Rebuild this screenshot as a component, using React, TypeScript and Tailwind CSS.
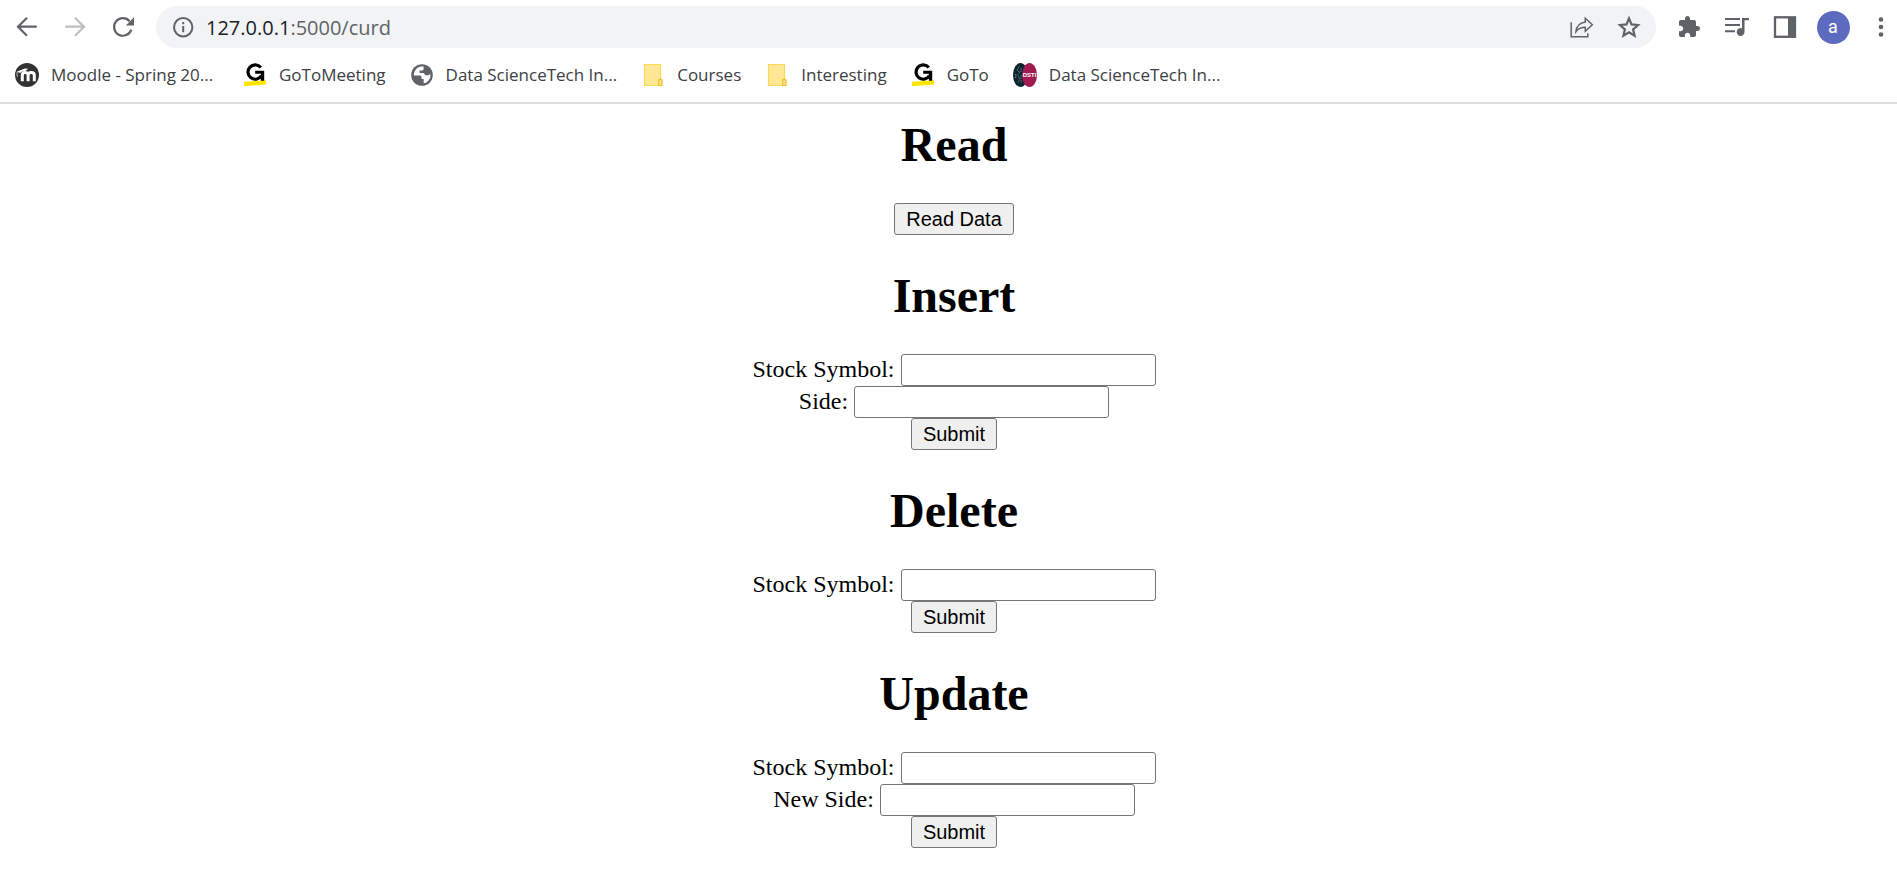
import React, { useId } from "react";

type IconProps = { className?: string };

const BackIcon = ({ className = "" }: IconProps) => (
  <svg viewBox="0 0 30 30" className={`size-[30px] ${className}`} fill="none" stroke="currentColor" strokeWidth="2.2" aria-hidden="true">
    <path d="M24.7 14.7H7M15 5.7l-9 9 9 9" />
  </svg>
);

const ForwardIcon = ({ className = "" }: IconProps) => (
  <svg viewBox="0 0 30 30" className={`size-[30px] ${className}`} fill="none" stroke="currentColor" strokeWidth="2.2" aria-hidden="true">
    <path d="M5.3 14.7H23M15 5.7l9 9-9 9" />
  </svg>
);

const ReloadIcon = () => (
  <svg viewBox="0 0 30 30" className="size-[30px]" fill="none" aria-hidden="true">
    <path d="M21.6 9.2A8.8 8.8 0 1 0 23.3 17.6" stroke="currentColor" strokeWidth="2.2" />
    <path d="M26 5.3v8.2h-8.2z" fill="currentColor" />
  </svg>
);

const InfoIcon = () => (
  <svg viewBox="0 0 30 30" className="size-[30px]" aria-hidden="true">
    <circle cx="15.2" cy="15.3" r="9.2" fill="none" stroke="currentColor" strokeWidth="2" />
    <path d="M14.2 14h2v6.300h-2zM14.2 10h2v2.200h-2z" fill="currentColor" />
  </svg>
);

const ShareIcon = () => (
  <svg viewBox="0 0 30 30" className="size-[30px]" fill="none" stroke="currentColor" strokeWidth="1.5" aria-hidden="true">
    <path d="M5.2 10.2v14.5h16.6v-3.5" />
    <path d="M19.3 6.2l7 6.500-7 6.500v-3.900c-4 0-7 1.200-9.400 4.400.5-5 3.600-9 9.400-9.800z" />
  </svg>
);

const StarIcon = () => (
  <svg viewBox="0 0 30 30" className="size-[30px]" aria-hidden="true">
    <path
      d="M15 6.400l2.500 6 6.500.6-4.900 4.300 1.500 6.400L15 20.300l-5.600 3.400 1.500-6.400L6 13l6.500-.6z"
      fill="none"
      stroke="currentColor"
      strokeWidth="2.200"
    />
  </svg>
);

const PuzzleIcon = () => (
  <svg viewBox="0 0 24 24" className="size-6" fill="currentColor" aria-hidden="true">
    <path d="M20.500 11H19V7c0-1.100-.9-2-2-2h-4V3.500C13 2.120 11.880 1 10.500 1S8 2.120 8 3.500V5H4c-1.100 0-1.990.9-1.990 2v3.800H3.500c1.490 0 2.700 1.210 2.700 2.700s-1.210 2.700-2.700 2.700H2V20c0 1.100.9 2 2 2h3.800v-1.500c0-1.490 1.210-2.700 2.700-2.700s2.700 1.210 2.700 2.700V22H17c1.100 0 2-.9 2-2v-4h1.500c1.380 0 2.500-1.120 2.500-2.500S21.880 11 20.500 11z" />
  </svg>
);

const QueueIcon = () => (
  <svg viewBox="0 0 30 30" className="size-[30px]" fill="currentColor" aria-hidden="true">
    <path d="M3 6h15v2H3zM3 12h15v2H3zM3 18.300h10v2H3z" />
    <path d="M20 6h7v2.200h-4.500v11.800a3.900 3.900 0 1 1-2.500-3.600z" />
  </svg>
);

const PanelIcon = () => (
  <svg viewBox="0 0 30 30" className="size-[30px]" aria-hidden="true">
    <rect x="5" y="5.300" width="20" height="19.500" fill="none" stroke="currentColor" strokeWidth="2.300" />
    <path d="M18 5h7v20h-7z" fill="currentColor" />
  </svg>
);

const DotsIcon = () => (
  <svg viewBox="0 0 30 30" className="size-[30px]" fill="currentColor" aria-hidden="true">
    <circle cx="15" cy="7.500" r="2.300" />
    <circle cx="15" cy="15" r="2.300" />
    <circle cx="15" cy="22.500" r="2.300" />
  </svg>
);

const MoodleIcon = () => (
  <svg viewBox="0 0 24 24" className="size-6" aria-hidden="true">
    <circle cx="12" cy="12" r="12" fill="#333333" />
    <path
      d="M7.300 18.200v-6c0-3.600 5.800-3.600 5.800 0v6M13.100 12.200c0-3.600 6.200-3.600 6.200 0v6"
      fill="none"
      stroke="#ffffff"
      strokeWidth="3"
    />
    <path d="M1.800 8.800l8-3.300 3.500.2-3.300 2.600c-2.500-.4-4 .5-4.600 1.700z" fill="#ffffff" />
    <path d="M2.200 8.900c-.3 1.700-.2 3.200.1 4.800" fill="none" stroke="#ffffff" strokeWidth=".7" />
  </svg>
);

const GoToIcon = () => (
  <svg viewBox="0 0 24 24" className="size-6" aria-hidden="true">
    <path d="M1 18.800l22-1.500v4.200L1 23.200z" fill="#ffe600" />
    <path d="M17.800 4.500A7.200 7.200 0 1 0 18.500 12.500" fill="none" stroke="#000000" strokeWidth="3.200" />
    <path d="M12.200 7.800h9v9.900h-3.300v-7H12.200z" fill="#000000" />
  </svg>
);

const GlobeIcon = () => (
  <svg viewBox="0 0 24 24" className="size-6" aria-hidden="true">
    <circle cx="12" cy="12" r="10.800" fill="#5f6368" />
    <path
      d="M13.500 3.600c-3.800-.7-7.200 1.200-8.800 4.600-.7 1.700-.9 3-.8 4.300h5.600c1.700 0 2 .8 2 2.100v1.300h2.200v4.300c3.300-.4 5.700-2.800 6.500-5.800.3-1.200.3-2.500 0-3.700-1 1.400-2.100 1.800-3.700 1.600-2.200-.3-1.700-2.200-3.400-2.400H9.500V7.600h2.400c1.300 0 1.700-.6 1.700-1.800z"
      fill="#ffffff"
    />
  </svg>
);

const FolderIcon = () => (
  <svg viewBox="0 0 24 24" className="size-6" aria-hidden="true">
    <path d="M3.500 1.500h16v21h-16z" fill="#ffe793" stroke="#fbd75b" strokeWidth="1.200" />
    <path d="M17.700 22.500v-5.300c0-1.400 3.300-1.400 3.300 0v5.300z" fill="#ffe487" stroke="#eec02f" strokeWidth="1.200" />
  </svg>
);

const DstiIcon = () => (
  <svg viewBox="0 0 24 24" className="size-6" aria-hidden="true">
    <ellipse cx="7.500" cy="12" rx="7.500" ry="12" fill="#0d2430" />
    <path d="M6 3.500l-2 4 3 1.500-3.500 4L7 15l-2 4M8 5v4M2.500 11v5M8 12v8" fill="none" stroke="#81919a" strokeWidth=".8" strokeDasharray="1.500 1" />
    <ellipse cx="16.500" cy="12" rx="7.500" ry="12" fill="#a01c50" />
    <text x="16.600" y="14.300" textAnchor="middle" fontSize="6" fontWeight="700" fontFamily="Liberation Sans, sans-serif" fill="#ffffff">
      DSTI
    </text>
  </svg>
);

const bookmarks = [
  { label: "Moodle - Spring 20...", Icon: MoodleIcon },
  { label: "GoToMeeting", Icon: GoToIcon },
  { label: "Data ScienceTech In...", Icon: GlobeIcon },
  { label: "Courses", Icon: FolderIcon },
  { label: "Interesting", Icon: FolderIcon },
  { label: "GoTo", Icon: GoToIcon },
  { label: "Data ScienceTech In...", Icon: DstiIcon },
];

function ToolButton({ label, children }: { label: string; children: React.ReactNode }) {
  return (
    <button type="button" aria-label={label} className="flex size-[30px] shrink-0 items-center justify-center">
      {children}
    </button>
  );
}

function BrowserBar() {
  return (
    <header className="border-b-2 border-[#dcdcdc] bg-white font-['Open_Sans','Noto_Sans',sans-serif] text-[#5f6368]">
      <div className="flex items-center gap-[18px] pt-[6px] pr-px pl-3">
        <ToolButton label="Back"><BackIcon /></ToolButton>
        <ToolButton label="Forward"><ForwardIcon className="text-[#bdbfc1]" /></ToolButton>
        <ToolButton label="Reload"><ReloadIcon /></ToolButton>
        <div className="flex h-[42px] min-w-0 flex-1 items-center rounded-full bg-[#f1f3f4] px-3">
          <ToolButton label="Site information"><InfoIcon /></ToolButton>
          <div
            role="textbox"
            aria-label="Address"
            contentEditable
            suppressContentEditableWarning
            className="ml-2 min-w-0 flex-1 truncate pt-px text-[20px] leading-7 outline-none"
          >
            <span className="text-[#202124]">127.0.0.1</span>:5000/curd
          </div>
          <div className="flex gap-[18px]">
            <ToolButton label="Share"><ShareIcon /></ToolButton>
            <ToolButton label="Bookmark this page"><StarIcon /></ToolButton>
          </div>
        </div>
        <ToolButton label="Extensions"><PuzzleIcon /></ToolButton>
        <ToolButton label="Media controls"><QueueIcon /></ToolButton>
        <ToolButton label="Side panel"><PanelIcon /></ToolButton>
        <ToolButton label="Profile">
          <span className="flex size-[33px] shrink-0 items-center justify-center rounded-full bg-[#5c6bc0] pb-px font-[Roboto,sans-serif] text-[18px] leading-5 text-white">
            a
          </span>
        </ToolButton>
        <ToolButton label="Menu"><DotsIcon /></ToolButton>
      </div>
      <nav aria-label="Bookmarks" className="flex h-[54px] items-center gap-6 pl-[15px] text-[17px] leading-6 text-[#3c4043]">
        {bookmarks.map(({ label, Icon }, i) => (
          <a key={i} href="#" className="flex shrink-0 items-center gap-3 whitespace-nowrap">
            <Icon />
            <span className={label.endsWith("...") ? "min-w-[168px]" : ""}>{label}</span>
          </a>
        ))}
      </nav>
    </header>
  );
}

function Heading({ children }: { children: React.ReactNode }) {
  return <h1 className="pt-[34px] pb-[31px] text-[48px] leading-[54px] font-bold">{children}</h1>;
}

function ActionButton({ type, children }: { type: "button" | "submit"; children: React.ReactNode }) {
  return (
    <button
      type={type}
      className="block h-8 rounded-[3px] border border-[#767676] bg-[#efefef] px-[11px] font-['Liberation_Sans',Arial,sans-serif] text-[20px] leading-[23px]"
    >
      {children}
    </button>
  );
}

function Field({ label }: { label: string }) {
  const id = useId();
  return (
    <div className="flex h-8 items-center gap-[6px]">
      <label htmlFor={id} className="pb-[2px] leading-7">{label}</label>
      <input
        id={id}
        type="text"
        className="h-8 w-[255px] rounded-[3px] border border-[#767676] bg-white px-[3px] font-['Liberation_Sans',Arial,sans-serif] text-[20px]"
      />
    </div>
  );
}

function StockForm({ fields }: { fields: string[] }) {
  return (
    <form className="flex flex-col items-center" onSubmit={(e) => e.preventDefault()}>
      {fields.map((f) => (
        <Field key={f} label={f} />
      ))}
      <ActionButton type="submit">Submit</ActionButton>
    </form>
  );
}

export default function App() {
  return (
    <div className="min-h-screen bg-white">
      <BrowserBar />
      <main className="flex flex-col items-center pt-[14px] pl-[11px] font-['Liberation_Serif','Times_New_Roman',serif] text-[24px] text-black">
        <h1 className="pb-[31px] text-[48px] leading-[54px] font-bold">Read</h1>
        <ActionButton type="button">Read Data</ActionButton>
        <Heading>Insert</Heading>
        <StockForm fields={["Stock Symbol:", "Side:"]} />
        <Heading>Delete</Heading>
        <StockForm fields={["Stock Symbol:"]} />
        <Heading>Update</Heading>
        <StockForm fields={["Stock Symbol:", "New Side:"]} />
      </main>
    </div>
  );
}
